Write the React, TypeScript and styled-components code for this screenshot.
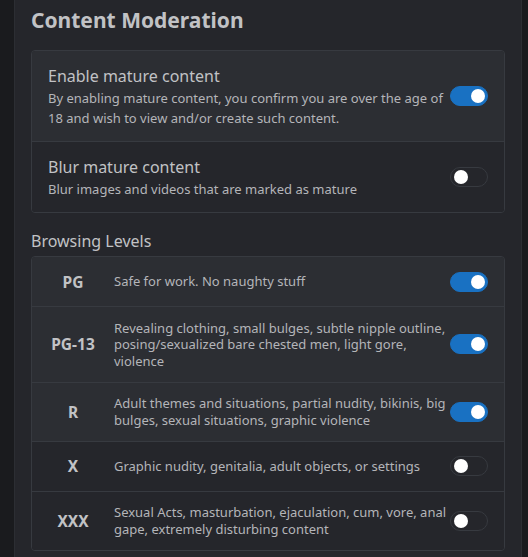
import styled, { createGlobalStyle } from "styled-components";

const GlobalStyle = createGlobalStyle`
    html, body {
        margin: 0;
        padding: 0;
        background: #1a1b1e;
    }
    body {
        font-family: "Segoe UI", "Noto Sans", sans-serif;
        color: #c1c2c5;
    }
`;

const Panel = styled.div`
    margin-left: 14px;
    width: 508px;
    height: 557px;
    box-sizing: border-box;
    background: #25262b;
    border-left: 1px solid #2c2e33;
    border-right: 1px solid #2c2e33;
    padding: 5px 16px 0;
    overflow: hidden;
`;

const Heading = styled.h2`
    margin: 0 0 15px;
    font-size: 21px;
    line-height: 30px;
    font-weight: 700;
    color: #c1c2c5;
`;

const SubHeading = styled.div`
    margin: 17px 0 4px;
    font-size: 16px;
    line-height: 22px;
    color: #c1c2c5;
`;

const Card = styled.div`
    border: 1px solid #373a40;
    border-radius: 4px;
    overflow: hidden;
`;

const Row = styled.div<{ $active?: boolean; $pad?: number }>`
    display: flex;
    align-items: center;
    gap: 2px;
    padding: ${(p) => p.$pad ?? 13}px 16px;
    background: ${(p) => (p.$active ? "#2c2e33" : "#25262b")};
    & + & {
        border-top: 1px solid #373a40;
    }
`;

const TextColumn = styled.div`
    flex: 1;
    min-width: 0;
`;

const RowTitle = styled.div`
    font-size: 16px;
    line-height: 24px;
    color: #c1c2c5;
`;

const RowDesc = styled.div`
    font-size: 13px;
    line-height: 20px;
    color: #b4b5b9;
`;

const LevelLabel = styled.div`
    width: 50px;
    flex-shrink: 0;
    margin-right: 14px;
    text-align: center;
    font-size: 15.5px;
    line-height: 24px;
    font-weight: 700;
    color: #c1c2c5;
`;

const LevelDesc = styled.div`
    flex: 1;
    min-width: 0;
    font-size: 13px;
    line-height: 16.5px;
    color: #b4b5b9;
`;

const Track = styled.div<{ $on: boolean }>`
    position: relative;
    flex-shrink: 0;
    width: 38px;
    height: 20px;
    box-sizing: border-box;
    border-radius: 10px;
    background: ${(p) => (p.$on ? "#1971c2" : "#25262b")};
    border: 1px solid ${(p) => (p.$on ? "#1971c2" : "#373a40")};
`;

const Thumb = styled.div<{ $on: boolean }>`
    position: absolute;
    top: 2px;
    left: ${(p) => (p.$on ? "20px" : "3px")};
    width: 14px;
    height: 14px;
    border-radius: 50%;
    background: #fff;
`;

const Toggle = ({ on }: { on: boolean }) => (
    <Track $on={on}>
        <Thumb $on={on} />
    </Track>
);

const levels = [
    { label: "PG", desc: "Safe for work. No naughty stuff", on: true },
    {
        label: "PG-13",
        desc: "Revealing clothing, small bulges, subtle nipple outline, posing/sexualized bare chested men, light gore, violence",
        on: true,
    },
    {
        label: "R",
        desc: "Adult themes and situations, partial nudity, bikinis, big bulges, sexual situations, graphic violence",
        on: true,
    },
    { label: "X", desc: "Graphic nudity, genitalia, adult objects, or settings", on: false },
    {
        label: "XXX",
        desc: "Sexual Acts, masturbation, ejaculation, cum, vore, anal gape, extremely disturbing content",
        on: false,
    },
];

const App = () => (
    <>
        <GlobalStyle />
        <Panel>
            <Heading>Content Moderation</Heading>
            <Card>
                <Row $active>
                    <TextColumn>
                        <RowTitle>Enable mature content</RowTitle>
                        <RowDesc>
                            By enabling mature content, you confirm you are over the age of 18 and
                            wish to view and/or create such content.
                        </RowDesc>
                    </TextColumn>
                    <Toggle on />
                </Row>
                <Row>
                    <TextColumn>
                        <RowTitle>Blur mature content</RowTitle>
                        <RowDesc>Blur images and videos that are marked as mature</RowDesc>
                    </TextColumn>
                    <Toggle on={false} />
                </Row>
            </Card>
            <SubHeading>Browsing Levels</SubHeading>
            <Card>
                {levels.map((l) => (
                    <Row key={l.label} $active={l.on} $pad={12.5}>
                        <LevelLabel>{l.label}</LevelLabel>
                        <LevelDesc>{l.desc}</LevelDesc>
                        <Toggle on={l.on} />
                    </Row>
                ))}
            </Card>
        </Panel>
    </>
);

export default App;
